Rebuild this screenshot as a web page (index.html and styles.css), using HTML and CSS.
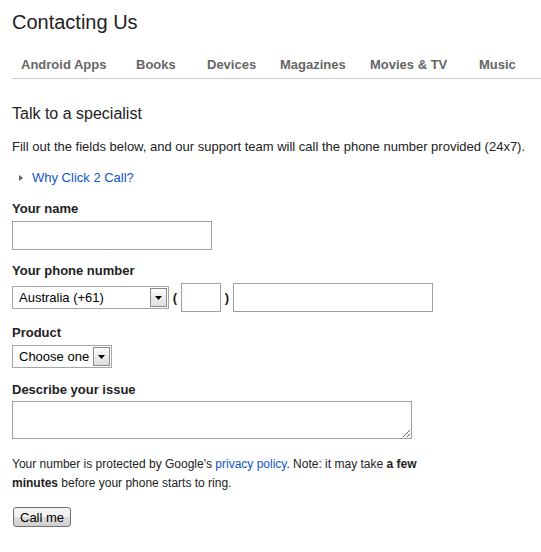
FILE: index.html
```html
<!DOCTYPE html>
<html lang="en">
<head>
    <meta charset="UTF-8">
    <title>Contacting Us</title>
<link rel="stylesheet" href="styles.css">
</head>
<body>
    <h1>Contacting Us</h1>
    <div class="tabs">
        <a href="#">Android Apps</a>
        <a href="#">Books</a>
        <a href="#">Devices</a>
        <a href="#">Magazines</a>
        <a href="#">Movies &amp; TV</a>
        <a href="#">Music</a>
    </div>

    <h2>Talk to a specialist</h2>
    <p class="intro">Fill out the fields below, and our support team will call the phone number provided (24x7).</p>
    <p class="why"><span class="tri"></span><a href="#">Why Click 2 Call?</a></p>

    <form>
        <div class="field">
            <label for="name">Your name</label>
            <input type="text" id="name" class="text wide">
        </div>
        <div class="field">
            <label for="area">Your phone number</label>
            <div class="phone">
                <span class="select country">
                    <select>
                        <option>Australia (+61)</option>
                    </select>
                    <span class="drop"><svg width="7" height="4" viewBox="0 0 7 4"><path d="M0 0h7L3.5 4z" fill="#000"/></svg></span>
                </span>
                <span class="paren">(</span>
                <input type="text" id="area" class="text area">
                <span class="paren">)</span>
                <input type="text" class="text wide">
            </div>
        </div>
        <div class="field product-field">
            <label>Product</label>
            <span class="select product">
                <select>
                    <option>Choose one</option>
                </select>
                <span class="drop"><svg width="7" height="4" viewBox="0 0 7 4"><path d="M0 0h7L3.5 4z" fill="#000"/></svg></span>
            </span>
        </div>
        <div class="field issue-field">
            <label for="issue">Describe your issue</label>
            <textarea id="issue"></textarea>
        </div>
        <p class="note">Your number is protected by Google's <a href="#">privacy policy</a>. Note: it may take <b>a few</b><br><b>minutes</b> before your phone starts to ring.</p>
        <button type="button">Call me</button>
    </form>
</body>
</html>
```

FILE: styles.css
```css
body{
    margin: 0;
    padding: 0 0 0 12px;
    font-family: "Liberation Sans", Arial, sans-serif;
    color: #222;
    font-size: 13px;
}
a{
    color: #1155cc;
    text-decoration: none;
}
h1{
    margin: 10px 0 0 0;
    font-size: 20px;
    line-height: 24px;
    font-weight: normal;
}
.tabs{
    margin-top: 23px;
    padding: 0 0 5px 9px;
    border-bottom: 1px solid #cccccc;
    display: grid;
    grid-template-columns: 115px 71px 73px 90px 109px auto;
}
.tabs a{
    color: #666;
    font-weight: bold;
    font-size: 13px;
    line-height: 16px;
}
h2{
    margin: 25px 0 0 0;
    font-size: 16px;
    line-height: 20px;
    font-weight: normal;
}
.intro{
    margin: 15px 0 0 0;
    line-height: 16px;
}
.why{
    margin: 15px 0 0 0;
    line-height: 16px;
    display: flex;
    align-items: center;
}
.tri{
    width: 0;
    height: 0;
    border-left: 4px solid #666;
    border-top: 3.5px solid transparent;
    border-bottom: 3.5px solid transparent;
    margin: 0 9px 0 7px;
}
form{
    margin-top: 15px;
}
.field{
    margin-bottom: 13px;
}
.product-field{
    margin-bottom: 14px;
}
.field label{
    display: block;
    font-weight: bold;
    line-height: 16px;
    margin-bottom: 4px;
}
.issue-field label{
    margin-bottom: 3px;
}
.text{
    box-sizing: border-box;
    height: 29px;
    border: 1px solid #a0a0a0;
    margin: 0;
    padding: 2px 4px;
    font: 13px "Liberation Sans", Arial, sans-serif;
    display: block;
}
.wide{
    width: 200px;
}
.area{
    width: 40px;
}
.phone{
    display: flex;
    align-items: center;
}
.paren{
    width: 12px;
    text-align: center;
    font-weight: bold;
}
.select{
    position: relative;
    display: inline-block;
    vertical-align: top;
}
.select select{
    appearance: none;
    -webkit-appearance: none;
    box-sizing: border-box;
    height: 23px;
    margin: 0;
    border: 1px solid #a5a5a5;
    border-radius: 0;
    background: #fff;
    padding: 0 22px 0 6px;
    font: 13px "Liberation Sans", Arial, sans-serif;
    color: #000;
    display: block;
}
.country select{
    width: 157px;
}
.product select{
    width: 100px;
}
.drop{
    position: absolute;
    right: 2px;
    top: 2px;
    width: 17px;
    height: 19px;
    box-sizing: border-box;
    border: 1px solid #8a8a8a;
    background: linear-gradient(#fafafa, #dedede);
    display: flex;
    align-items: center;
    justify-content: center;
    pointer-events: none;
}
textarea{
    box-sizing: border-box;
    width: 400px;
    height: 38px;
    border: 1px solid #a0a0a0;
    margin: 0;
    display: block;
    font: 13px "Liberation Sans", Arial, sans-serif;
}
.note{
    margin: 16px 0 0 0;
    font-size: 12px;
    line-height: 19px;
    max-width: 440px;
}
button{
    margin: 14px 0 0 1px;
    height: 20px;
    padding: 0 6px;
    border: 1px solid #707070;
    border-radius: 3px;
    background: linear-gradient(#f2f2f2 50%, #dddddd 50%, #cfcfcf);
    font: 13px "Liberation Sans", Arial, sans-serif;
    color: #000;
}
```
